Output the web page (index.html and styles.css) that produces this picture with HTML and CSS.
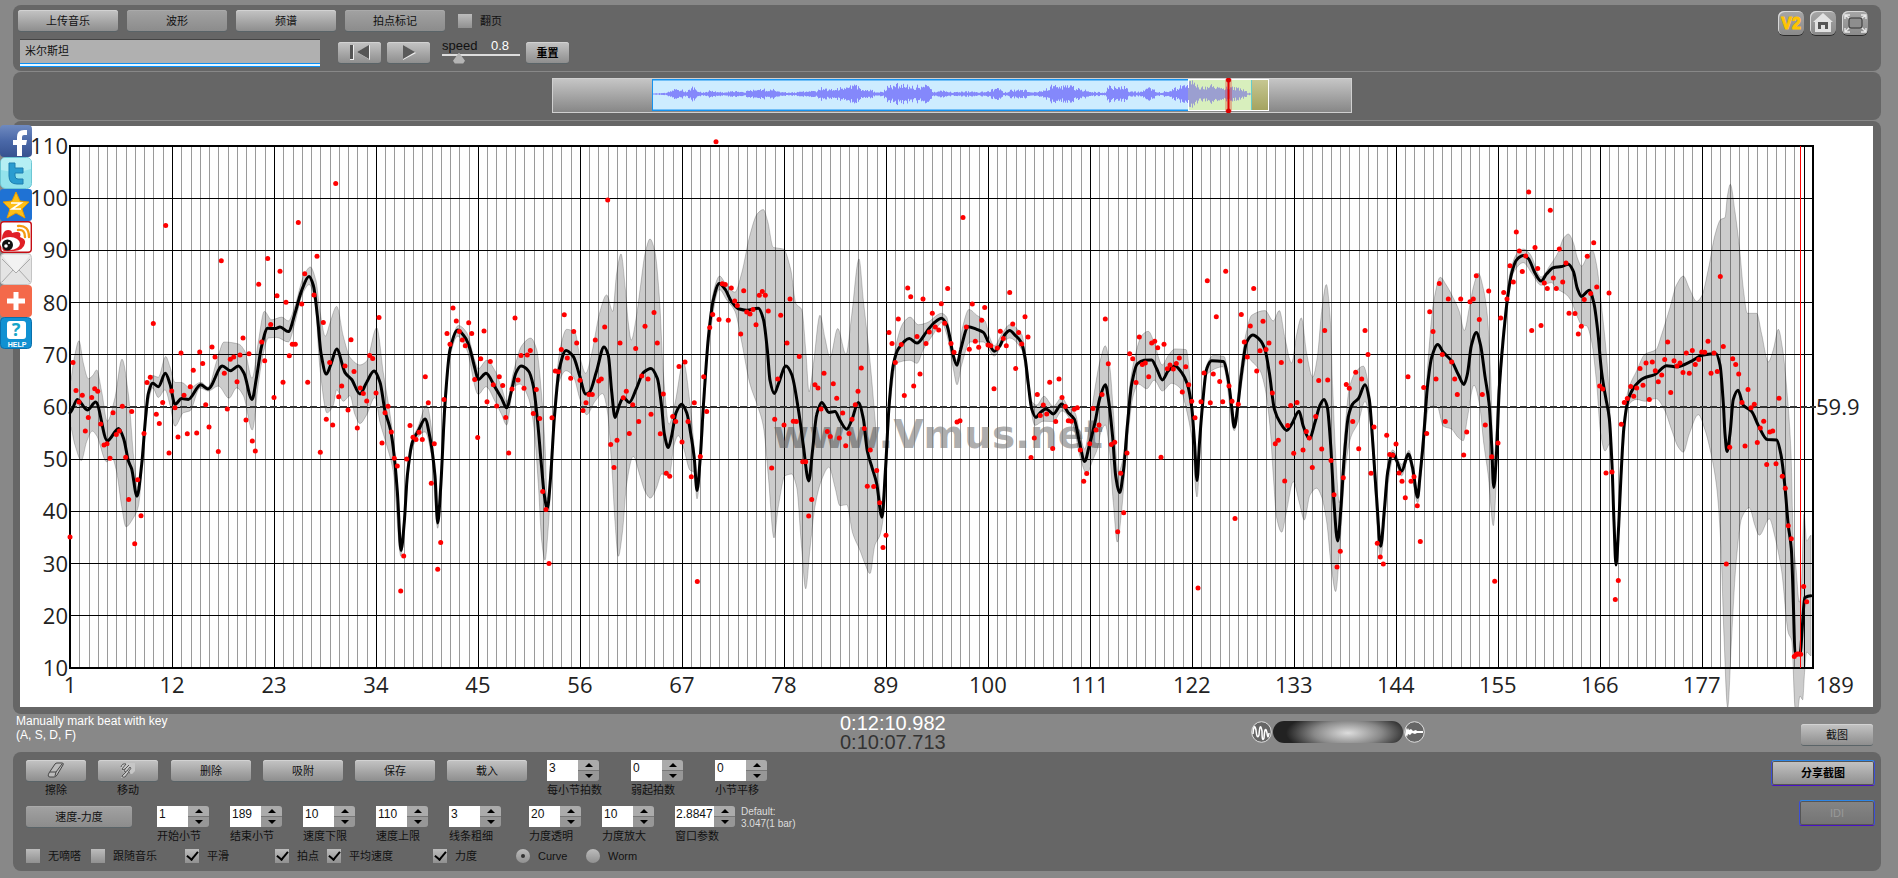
FILE: index.html
```html
<!DOCTYPE html>
<html lang="zh-CN">
<head>
<meta charset="utf-8">
<title>Vmus.net</title>
<link rel="stylesheet" href="styles.css">
</head>
<body>
<nav class="social" aria-label="分享">
  <a href="#" aria-label="Facebook"><svg viewBox="0 0 32 32"><defs><linearGradient id="fb" x2="0" y2="1"><stop stop-color="#6f8ac0"/><stop offset=".5" stop-color="#4a68a8"/><stop offset="1" stop-color="#36528f"/></linearGradient></defs><rect width="32" height="32" rx="4" fill="url(#fb)"/><path d="M17 31V20h-4v-5h4v-3q0-7 7-7h3v5h-3q-2 0-2 2v3h5l-1 5h-4v11z" fill="#fff"/></svg></a>
  <a href="#" aria-label="Twitter"><svg viewBox="0 0 32 32"><rect x=".5" y=".5" width="31" height="31" rx="5" fill="#93e3ec" stroke="#6cc7d4"/><path d="M1 5q0-4 4-4h22q4 0 4 4v7q-14 5-30 1z" fill="#b5eff4"/><path d="M9 6h6v5h8v5h-8v3q0 3 3 3h5v5h-6q-8 0-8-8z" fill="#2a9cd0" stroke="#1c7fb0" stroke-width="1"/></svg></a>
  <a href="#" aria-label="QQ空间"><svg viewBox="0 0 32 32"><rect width="32" height="32" rx="3" fill="#1f72d4"/><path d="M16 3l4 9 9 1-7 7 3 9-9-5-9 5 3-9-7-7 9-1z" fill="#fdbf17" stroke="#e89a00"/><path d="M11 14h10l-9 6h9" fill="none" stroke="#fff" stroke-width="1.600"/></svg></a>
  <a href="#" aria-label="微博"><svg viewBox="0 0 32 32"><rect x=".7" y=".7" width="30.6" height="30.6" rx="3" fill="#fff" stroke="#c40d14" stroke-width="1.4"/><path d="M2 17q1-8 6-8 4 0 4 3 6-2 8 0 1 2 0 4 6 2 5 6-1 7-11 8H4q-3-1-2-13z" fill="#e01f26"/><ellipse cx="10" cy="22.500" rx="10" ry="6.500" fill="#fff"/><circle cx="7.500" cy="24" r="5.500" fill="#111"/><circle cx="6" cy="25" r="1.800" fill="#fff"/><circle cx="9" cy="22" r="1" fill="#fff"/><path d="M18 9q7-1 7 7M18 5q11-1 11 11" fill="none" stroke="#f39a12" stroke-width="2.4" stroke-linecap="round"/></svg></a>
  <a href="#" aria-label="邮件"><svg viewBox="0 0 32 32"><rect x=".5" y=".5" width="31" height="31" rx="4" fill="#e4e4e4" stroke="#c4c4c4"/><path d="M2 2h28L16 20z" fill="#f2f2f2"/><path d="M2 6l14 14L30 6M2 29l11-12M30 29L19 17" fill="none" stroke="#aaa"/></svg></a>
  <a href="#" aria-label="更多"><svg viewBox="0 0 32 32"><rect width="32" height="32" rx="4" fill="#f4694a"/><path d="M13.500 7h5v6.500H25v5h-6.500V25h-5v-6.500H7v-5h6.500z" fill="#fff"/></svg></a>
  <a href="#" aria-label="帮助"><svg viewBox="0 0 32 32"><rect x=".5" y=".5" width="31" height="31" rx="4" fill="#1191d2" stroke="#0a6fab"/><rect x="7" y="4" width="19" height="18" rx="3" fill="#fff"/><text x="16" y="19" class="help-mark">?</text><text x="17" y="30" class="help-text">HELP</text></svg></a>
</nav>

<header class="panel toolbar">
  <div class="tools">
    <div class="tool-row">
      <button class="btn wide">上传音乐</button>
      <button class="btn wide flat">波形</button>
      <button class="btn wide">频谱</button>
      <button class="btn wide flat">拍点标记</button>
      <label class="check"><input type="checkbox">翻页</label>
    </div>
    <div class="tool-row lower">
      <input class="song" type="text" value="米尔斯坦" aria-label="曲名">
      <div class="transport">
        <button class="btn small" aria-label="回到开头"><svg width="22" height="17" viewBox="0 0 22 17"><path d="M1 1h4v15H1zM21 1v15L8 8z" fill="#eee"/><path d="M1 1h3v14H1zM20 1v14L8 8z" fill="#555"/></svg></button>
        <button class="btn small" aria-label="播放"><svg width="16" height="17" viewBox="0 0 16 17"><path d="M2 1v15l13-7z" fill="#eee"/><path d="M2 1v14l12-7z" fill="#5a5a5a"/></svg></button>
      </div>
      <div class="speed">
        <label for="speed">speed</label><output for="speed">0.8</output>
        <input id="speed" type="range" min="0.5" max="2.300" step="0.1" value="0.8">
      </div>
      <button class="btn small strong">重置</button>
    </div>
  </div>
  <div class="corner">
    <button class="chip" aria-label="V2"><svg viewBox="0 0 26 24"><text x="13" y="18" class="v2">V2</text></svg></button>
    <button class="chip" aria-label="主页"><svg viewBox="0 0 26 24"><path d="M13 2l10 9h-2v10H5V11H3z" fill="#e2e2e2"/><path d="M8 18v-7h10v7h-3v-4h-4v4z" fill="#555"/></svg></button>
    <button class="chip" aria-label="全屏"><svg viewBox="0 0 26 24"><rect x="7" y="7" width="13" height="10" rx="2" fill="#8e8e8e" stroke="#333"/><path d="M3 8V4h5M3 4l4 3M19 4h5v4M24 4l-4 3M3 17v4h5M3 21l4-4M24 17v4h-5M24 21l-4-4" fill="none" stroke="#e8e8e8" stroke-width="1.4"/></svg></button>
  </div>
</header>

<section class="panel overview">
  <svg id="wave" class="wave" viewBox="0 0 800 35" role="img" aria-label="波形总览">
    <defs><linearGradient id="strip" x2="0" y2="1"><stop stop-color="#c6c6c6"/><stop offset="1" stop-color="#868686"/></linearGradient>
    <linearGradient id="olive" x2="0" y2="1"><stop stop-color="#c6c792"/><stop offset="1" stop-color="#a3a25e"/></linearGradient></defs>
    <rect x=".5" y=".5" width="799" height="34" fill="url(#strip)" stroke="#d0d0d0"/>
    <rect x="100.5" y="2" width="537" height="30" fill="#cdecff" stroke="#1792ee" stroke-width="1"/>
    <path d="M100 1.5h536M100 32.5h536" stroke="#1792ee"/>
    <rect x="636" y="2" width="63" height="31" fill="#d8efbd"/>
    <rect x="699" y="2" width="18" height="31" fill="url(#olive)"/>
    <path d="M699.500 2v31" stroke="#6cc"/>
    <rect x="636.500" y="1.500" width="80" height="31" fill="none" stroke="#fff"/>
    <g id="wave-shape"></g>
    <rect x="673" y="1" width="7" height="33" fill="#e00" opacity=".25"/>
    <path d="M676.500 1v33" stroke="#e00000" stroke-width="2"/><circle cx="676.500" cy="2" r="2.500" fill="#d00"/><circle cx="676.500" cy="33" r="2.500" fill="#d00"/>
  </svg>
</section>

<main class="panel stage">
  <svg id="chart" class="chart" viewBox="20 126 1853 581" role="img" aria-label="速度-力度曲线">
    <g id="grid"></g>
    <text class="watermark" x="773" y="448">www.Vmus.net</text>
    <path id="band" class="band"/>
    <path class="mean" d="M70 407H1816"/>
    <path id="curve" class="curve"/>
    <g id="beats" class="beats"></g>
    <path class="cursor" d="M1800.500 146V668"/>
    <g id="labels" class="labels"></g>
  </svg>
</main>

<section class="status">
  <p class="hint">Manually mark beat with key<br>(A, S, D, F)</p>
  <p class="time"><span>0:12:10.982</span><span class="dark">0:10:07.713</span></p>
  <div class="blend">
    <svg width="21" height="22" viewBox="0 0 21 22"><ellipse cx="10.500" cy="11" rx="9.800" ry="10.300" fill="#666" stroke="#ddd"/><path d="M2 13q1-12 3-4 1 10 3 5 1-14 3-4 0 12 2 7 1-14 3-5 1 8 2 0" fill="none" stroke="#fff" stroke-width="1.500"/></svg>
    <div class="pill"></div>
    <svg width="21" height="22" viewBox="0 0 21 22"><ellipse cx="10.500" cy="11" rx="9.800" ry="10.300" fill="#666" stroke="#ddd"/><path d="M2 6l1 3 1-2 1 2 2-1 2 2 3-1 1 1h6v2h-6l-2 1-3-1-2 2-2-1-1 3-1-2-1 2z" fill="#fff"/></svg>
  </div>
  <button class="btn shot">截图</button>
</section>

<section class="panel controls">
  <div class="left">
    <div class="row first">
      <div class="actions">
        <div class="cell"><button class="btn icon" aria-labelledby="t1"><svg width="18" height="17" viewBox="0 0 18 17"><path d="M2 11L8 2q1-1 2-1h5q2 0 1 2l-6 10q-1 2-3 2H3q-3 0-1-4z" fill="#bbb" stroke="#444"/><path d="M3 10h6l6-8M9 10l-1 4" fill="none" stroke="#444"/></svg></button><span id="t1">擦除</span></div>
        <div class="cell"><button class="btn icon" aria-labelledby="t2"><svg width="18" height="17" viewBox="0 0 18 17"><path d="M2 5q1-4 5-4h9v8l-3 3-4-1-4 5H2l4-6-3-1z" fill="#c6c6c6"/><path d="M2 5q1-4 5-3L3 7q0 2 3 0l4-4M6 7q-2 4 2 2l3-4q2 1-1 4-2 2 1 2M7 10l-4 4q0 2 3 1l3-4" fill="none" stroke="#555"/></svg></button><span id="t2">移动</span></div>
      </div>
      <div class="actions text">
        <button class="btn mid">删除</button><button class="btn mid">吸附</button><button class="btn mid">保存</button><button class="btn mid">载入</button>
      </div>
      <div class="fields loose">
        <div class="field"><div class="spin"><input id="f1" type="text" value="3"><div class="arrows"><button aria-label="增加"></button><button aria-label="减少"></button></div></div><label for="f1">每小节拍数</label></div>
        <div class="field"><div class="spin"><input id="f2" type="text" value="0"><div class="arrows"><button aria-label="增加"></button><button aria-label="减少"></button></div></div><label for="f2">弱起拍数</label></div>
        <div class="field"><div class="spin"><input id="f3" type="text" value="0"><div class="arrows"><button aria-label="增加"></button><button aria-label="减少"></button></div></div><label for="f3">小节平移</label></div>
      </div>
    </div>
    <div class="row second">
      <button class="btn mode flat">速度-力度</button>
      <div class="fields">
        <div class="field"><div class="spin"><input id="g1" type="text" value="1"><div class="arrows"><button aria-label="增加"></button><button aria-label="减少"></button></div></div><label for="g1">开始小节</label></div>
        <div class="field"><div class="spin"><input id="g2" type="text" value="189"><div class="arrows"><button aria-label="增加"></button><button aria-label="减少"></button></div></div><label for="g2">结束小节</label></div>
        <div class="field"><div class="spin"><input id="g3" type="text" value="10"><div class="arrows"><button aria-label="增加"></button><button aria-label="减少"></button></div></div><label for="g3">速度下限</label></div>
        <div class="field"><div class="spin"><input id="g4" type="text" value="110"><div class="arrows"><button aria-label="增加"></button><button aria-label="减少"></button></div></div><label for="g4">速度上限</label></div>
        <div class="field"><div class="spin"><input id="g5" type="text" value="3"><div class="arrows"><button aria-label="增加"></button><button aria-label="减少"></button></div></div><label for="g5">线条粗细</label></div>
      </div>
      <div class="fields">
        <div class="field"><div class="spin"><input id="g6" type="text" value="20"><div class="arrows"><button aria-label="增加"></button><button aria-label="减少"></button></div></div><label for="g6">力度透明</label></div>
        <div class="field"><div class="spin"><input id="g7" type="text" value="10"><div class="arrows"><button aria-label="增加"></button><button aria-label="减少"></button></div></div><label for="g7">力度放大</label></div>
        <div class="field long"><div class="spin"><input id="g8" type="text" value="2.8847"><div class="arrows"><button aria-label="增加"></button><button aria-label="减少"></button></div></div><label for="g8">窗口参数</label></div>
      </div>
      <p class="default">Default:<br>3.047(1 bar)</p>
    </div>
    <div class="row options">
      <label class="check c1"><input type="checkbox">无嘀嗒</label>
      <label class="check c2"><input type="checkbox">跟随音乐</label>
      <label class="check c3"><input type="checkbox" checked>平滑</label>
      <label class="check c4"><input type="checkbox" checked>拍点</label>
      <label class="check c5"><input type="checkbox" checked>平均速度</label>
      <label class="check c6"><input type="checkbox" checked>力度</label>
      <label class="check c7"><input type="radio" name="view" checked>Curve</label>
      <label class="check c8"><input type="radio" name="view">Worm</label>
    </div>
  </div>
  <div class="right">
    <button class="btn share strong">分享截图</button>
    <button class="btn idi" disabled>IDI</button>
  </div>
</section>
<script src="chart.js"></script>
</body>
</html>
```

FILE: styles.css
```css
* { box-sizing: border-box; }
body {
  margin: 0;
  padding: 5px 17px 7px 13px;
  background: #888;
  color: #111;
  font: 11px/14px "Liberation Sans", "Noto Sans CJK SC", sans-serif;
}
p { margin: 0; }
button, input { font: inherit; color: inherit; }
svg { display: block; }
.panel { background: #666; border-radius: 8px; }

.social { position: absolute; left: 0; top: 125px; width: 32px; display: flex; flex-direction: column; }
.social a { display: block; height: 32px; }
.help-mark { font: bold 18px "Noto Sans", sans-serif; fill: #17a5c8; text-anchor: middle; }
.help-text { font: bold 7px "Liberation Sans", sans-serif; fill: #fff; text-anchor: middle; }

.btn {
  display: flex; align-items: center; justify-content: center;
  height: 21px; padding: 0; flex: none;
  border: 0; border-radius: 3px;
  background: linear-gradient(#c4c4c4, #8e8e8e);
  box-shadow: inset 0 1px #d2d2d2, 0 1px #5a6468;
}
.btn.flat { background: linear-gradient(#a2a2a2, #8c8c8c); box-shadow: inset 0 1px #aaa, 0 1px #5a6468; }
.btn.strong { font-weight: bold; color: #000; }
.wide { width: 100px; }
.small { width: 43px; }
.mid { width: 80px; }
.icon { width: 60px; }

.toolbar { display: flex; justify-content: space-between; height: 66px; padding: 5px 13px 0 5px; }
.tool-row { display: flex; gap: 9px; }
.tool-row.lower { gap: 0; padding: 8px 0 0 2px; align-items: flex-start; }
.check { display: flex; align-items: center; gap: 8px; }
.tool-row .check { margin-left: 4px; }
.check input {
  appearance: none; flex: none; width: 14px; height: 14px; margin: 0;
  background: linear-gradient(#bcbcbc, #909090);
  display: grid; place-items: center;
}
.check input[type="checkbox"]:checked::before {
  content: ""; width: 5px; height: 9px; margin-bottom: 3px;
  border: solid #000; border-width: 0 2px 2px 0; transform: rotate(40deg);
}
.check input[type="radio"] { border-radius: 50%; }
.check input[type="radio"]:checked::before { content: ""; width: 4px; height: 4px; border-radius: 50%; background: #333; }
.song {
  width: 300px; height: 28px; padding: 0 5px 8px;
  border: 0; border-top: 1px solid #444; background: #b0b0b0;
  box-shadow: inset 0 -1px #0a90f5, inset 0 -3px #e8f6ff, inset 0 -4px #0a90f5;
  outline: 0;
}
.transport { display: flex; gap: 6px; margin: 3px 12px 0 18px; }
.lower > .btn { margin: 3px 0 0 6px; }
.speed { width: 78px; display: grid; grid-template-columns: 49px 1fr; font-size: 13px; line-height: 13px; }
.speed output { color: #fff; }
.speed input {
  grid-column: 1 / 3; appearance: none; width: 78px; height: 12px; margin: 0;
  background: linear-gradient(#ddd, #ddd) 0 2px / 100% 2px no-repeat;
}
.speed input::-webkit-slider-thumb {
  appearance: none; width: 12px; height: 11px; background: #b4b4b4; clip-path: polygon(50% 0, 100% 75%, 85% 100%, 15% 100%, 0 75%);
}
.corner { display: flex; gap: 6px; padding-top: 1px; }
.chip {
  width: 26px; height: 24px; padding: 0; border: 0; border-radius: 6px;
  background: linear-gradient(#a6a6a6, #8a8a8a);
  box-shadow: inset 1px 1px #d8d8d8, 0 1px #2c2c2c;
}
.v2 { font: bold 16px "Liberation Sans", sans-serif; fill: #ffc400; stroke: #ffc400; text-anchor: middle; }

.overview { margin-top: 1px; padding: 6px 0 7px 9px; }
.wave { width: 800px; max-width: 100%; margin: 0 auto; }
.stage { margin-top: 1px; padding: 5px 8px 7px 7px; }
.chart { width: 100%; background: #fff; overflow: hidden; }
.minor { stroke: #9a9a9a; stroke-width: 1; shape-rendering: crispEdges; }
.major { stroke: #000; stroke-width: 1; shape-rendering: crispEdges; }
.frame { fill: none; stroke: #000; stroke-width: 2; }
.band { fill: #000; fill-opacity: .2; stroke: #000; stroke-opacity: .2; stroke-width: 1; }
.curve { fill: none; stroke: #000; stroke-width: 3; stroke-linejoin: round; stroke-linecap: round; }
.mean { fill: none; stroke: #333; stroke-width: 2; stroke-dasharray: 7 3; }
.beats { fill: #f00; }
.cursor { stroke: #f00; stroke-width: 1; shape-rendering: crispEdges; }
.labels { font: 22px "Open Sans", "Noto Sans", sans-serif; fill: #222; }
.watermark { font: bold 39px "DejaVu Sans", sans-serif; fill: #777; fill-opacity: .6; }

.status { display: flex; align-items: flex-start; height: 38px; padding-right: 8px; }
.hint { width: 827px; padding-left: 3px; color: #fff; font-size: 12px; line-height: 14px; }
.time { font-size: 20px; line-height: 19px; color: #fff; display: flex; flex-direction: column; }
.time .dark { color: #333; }
.blend { display: flex; align-items: center; gap: 1px; margin: 7px auto 0 305px; }
.pill { width: 130px; height: 22px; border-radius: 11px; background: radial-gradient(ellipse 62px 22px at 75px 12px, #ddd, #888 55%, #222); }
.shot { width: 72px; margin-top: 10px; }

.controls { display: flex; justify-content: space-between; height: 119px; padding: 8px 6px 0 13px; }
.row { display: flex; align-items: flex-start; }
.first { height: 46px; }
.second { height: 42px; }
.actions { display: flex; gap: 12px; }
.actions.text { margin: 0 20px 0 13px; }
.cell { display: flex; flex-direction: column; align-items: center; }
.cell span, .field label { margin-top: 2px; white-space: nowrap; }
.fields { display: flex; gap: 21px; margin-left: 25px; }
.fields + .fields { margin-left: 28px; }
.fields.loose { gap: 32px; margin-left: 0; }
.field { width: 52px; display: flex; flex-direction: column; align-items: flex-start; }
.field.long { width: 60px; }
.field.long input { padding: 0 0 5px 1px; }
.spin { display: flex; width: 100%; height: 21px; }
.spin input { flex: 1; min-width: 0; height: 21px; padding: 0 2px 5px; border: 0; background: #fff; font-size: 12px; outline: 0; }
.arrows { flex: none; width: 21px; display: flex; flex-direction: column; gap: 1px; background: #777; border-radius: 0 3px 3px 0; overflow: hidden; }
.arrows button { flex: 1; padding: 0; border: 0; background: #ababab; display: grid; place-items: center; }
.arrows button::before { content: ""; border: 4px solid transparent; border-top: 0; border-bottom: 4px solid #000; }
.arrows button + button { background: #979797; }
.arrows button + button::before { border-top: 4px solid #000; border-bottom: 0; }
.mode { width: 106px; }
.default { margin-left: 6px; color: #ddd; font-size: 10px; line-height: 12px; }
.options { height: 16px; align-items: center; }
.options .check { height: 14px; white-space: nowrap; }
.c1 { width: 65px; }
.c2 { width: 94px; }
.c3 { width: 90px; }
.c4 { width: 52px; }
.c5 { width: 106px; }
.c6 { width: 83px; }
.c7 { width: 70px; }
.right { display: flex; flex-direction: column; align-items: flex-end; gap: 14px; }
.right .btn {
  height: 26px; border: 1px solid; border-color: #2d86e8 #3c4fd8 #4a12c8;
  background: linear-gradient(#c4c4c4, #8e8e8e);
  box-shadow: inset 0 0 0 1px #555;
}
.right .share { width: 104px; }
.right .idi { width: 76px; color: #999; background: linear-gradient(#858585, #747474); }
```

FILE: chart.js
```js
const NS = 'http://www.w3.org/2000/svg';
function add(parent, tag, attrs, text) {
  const el = document.createElementNS(NS, tag);
  for (const k in attrs) el.setAttribute(k, attrs[k]);
  if (text !== undefined) el.textContent = text;
  document.getElementById(parent).appendChild(el);
}

// Each series is stored in four pages of 1410 horizontal units, three units to a pixel.
const series = pages => pages.flatMap((page, i) =>
  page.trim().split(/\s+/).map(p => {
    const [x, y] = p.split(',').map(Number);
    return [i * 470 + x / 3, 120 + y / 2.613];
  }));

const beats = series([
`210,1090 219,634 228,707 237,737 247,719 256,813 265,777 275,725 284,702 293,709 302,794 312,849 321,846 330,884 339,765 349,822 358,813 367,748 377,881 386,992 395,762 404,1107 413,940 423,1034 432,819 441,686 451,672 460,532 469,769 478,793 488,738 497,276 507,870 515,708 525,752 534,828 543,609 552,719 562,820 571,697 580,654 590,818 599,606 608,636 617,744 627,802 636,593 645,619 655,866 664,368 673,662 682,755 691,625 701,619 711,684 720,614 729,570 738,784 747,611 757,839 766,865 776,429 785,580 794,629 803,362 812,534 822,725 831,459 840,395 849,685 858,476 868,616 877,586 886,586 895,268 905,481 914,402 923,685 942,457 951,356 961,868 970,529 979,782 989,634 998,797 1007,166 1016,723 1025,695 1035,643 1044,758 1053,574 1062,657 1072,805 1081,700 1090,715 1100,734 1109,615 1118,623 1128,713 1137,516 1146,844 1155,765 1164,748 1174,815 1183,884 1192,904 1202,1231 1211,1139 1220,886 1230,798 1239,829 1248,835 1257,816 1267,835 1276,671 1285,739 1294,949 1303,846 1313,1174 1322,1104 1332,730 1341,558 1350,586 1359,491 1369,525 1378,553 1387,575 1396,590 1406,530 1415,558 1424,678 1433,830`,
`32,624 42,551 51,736 61,631 70,692 80,747 88,671 98,694 107,777 116,870 126,703 135,517 144,679 153,615 162,701 172,614 181,602 190,767 199,704 209,780 218,971 228,1018 237,1159 246,778 256,656 265,658 274,600 283,509 292,622 302,675 311,553 320,583 330,680 339,759 348,739 357,717 367,717 376,575 386,682 394,677 404,541 413,209 422,848 432,908 441,837 450,583 460,726 469,709 478,819 488,744 497,597 506,788 515,669 525,539 534,677 543,769 552,503 562,583 571,820 580,716 589,923 599,931 608,775 617,788 627,644 636,841 645,632 654,788 664,932 673,739 682,1206 691,879 701,671 710,762 719,542 728,508 738,57 747,521 757,428 766,430 775,523 784,439 794,473 802,485 812,559 821,446 830,502 840,507 849,495 858,535 868,458 877,448 886,458 895,499 905,909 914,782 923,677 932,510 942,797 951,583 960,468 970,787 979,788 988,618 998,893 1007,893 1016,1035 1025,992 1035,692 1044,700 1053,755 1062,662 1072,814 1081,827 1090,689 1100,727 1108,831 1118,766 1127,851 1137,819 1146,782 1156,744 1164,709 1174,648 1183,806 1192,957 1201,862 1211,958 1220,916 1229,1000 1239,1117 1248,1085 1257,555 1266,584 1276,634 1285,520 1294,587 1303,720 1313,439 1322,462 1331,695 1341,566 1350,664 1359,468 1368,584 1378,554 1387,505 1396,541 1406,549 1414,480 1424,531 1433,440`,
`33,584 42,607 51,789 60,786 69,255 79,541 88,599 97,481 106,578 116,594 125,523 134,490 144,588 152,590 162,702 172,596 181,552 190,571 199,590 209,451 218,533 227,649 236,555 245,585 255,514 264,567 273,882 283,831 292,717 301,772 310,745 320,768 329,685 338,858 347,788 357,677 366,725 376,749 385,786 394,787 403,756 412,752 421,862 431,944 440,924 449,846 459,754 468,810 477,797 486,717 496,520 505,637 514,848 524,842 533,1076 542,923 551,1026 561,870 569,611 578,624 588,686 598,567 607,639 616,635 626,671 635,583 644,578 653,595 663,881 672,586 682,650 690,640 700,651 709,636 718,622 727,711 737,645 746,692 755,735 765,778 774,1223 783,736 792,661 802,420 811,739 820,664 829,514 839,683 848,736 857,395 867,695 876,735 885,1041 895,743 904,508 913,580 922,619 931,538 941,440 950,656 960,603 969,526 978,600 987,583 997,713 1006,846 1015,837 1024,634 1034,943 1043,798 1052,746 1061,871 1071,738 1080,630 1089,862 1099,814 1108,831 1117,908 1127,775 1136,681 1145,860 1154,550 1163,679 1173,890 1182,979 1191,1168 1201,1127 1210,935 1219,691 1228,701 1238,788 1247,659 1256,859 1265,677 1275,550 1284,613 1293,923 1302,802 1312,1106 1321,1142 1330,1160 1340,824 1349,874 1358,876 1368,847 1377,922 1386,944 1396,987 1404,671 1413,944 1422,932 1432,1008`,
`31,1101 41,699 50,819 59,501 69,553 78,677 88,427 97,613 106,788 115,468 125,632 134,677 142,717 152,468 161,875 170,815 180,475 190,468 199,407 208,521 217,717 226,797 236,447 245,880 254,1205 264,844 272,517 281,451 291,468 300,381 310,423 319,293 328,342 337,396 347,355 356,188 365,550 375,333 383,388 393,537 403,426 412,440 421,236 430,413 439,440 448,337 458,423 468,374 477,505 495,506 505,559 514,539 523,469 532,356 542,453 551,321 560,436 569,695 578,703 588,922 597,452 606,920 616,1253 625,1203 634,795 643,738 652,728 662,696 671,722 680,700 690,649 699,693 708,635 718,730 727,632 736,655 745,684 755,666 764,626 773,580 782,712 792,629 801,643 810,635 819,660 829,609 838,662 847,602 856,639 866,626 875,606 884,607 894,578 903,662 912,609 922,657 931,409 940,592 949,1160 959,855 968,624 977,639 986,664 996,738 1005,852 1014,704 1023,752 1033,743 1042,843 1051,805 1061,787 1070,900 1079,815 1088,813 1098,898 1107,727 1117,931 1126,962 1135,1060 1144,1094 1153,1402 1158,1397 1162,1395 1167,1395 1172,1396 1181,1219 1190,1259`]);

const tempo = series([
`210,765 232,730 262,758 287,737 322,838 356,806 372,836 385,890 395,912 411,983 425,900 437,775 445,715 458,688 475,697 496,662 510,690 525,743 545,728 565,730 602,692 624,703 667,643 691,655 715,643 732,662 756,730 770,670 785,590 803,544 825,545 840,541 865,553 885,505 905,445 927,409 940,432 952,510 963,610 979,664 992,640 1010,598 1035,660 1055,678 1080,716 1100,685 1122,656 1140,685 1155,760 1172,812 1183,880 1192,970 1203,1125 1213,1050 1222,930 1237,842 1255,812 1275,781 1290,830 1305,930 1313,1053 1322,960 1335,740 1350,600 1373,549 1390,562 1405,585 1425,650`,
`25,678 48,662 75,698 95,728 110,752 125,705 138,660 153,643 175,655 190,695 203,790 215,910 223,980 232,1015 242,930 253,780 268,650 288,602 310,618 328,665 347,716 358,712 380,655 402,593 415,615 425,710 435,777 448,745 460,725 478,738 500,700 520,660 543,649 562,675 575,750 583,820 595,856 605,825 618,765 635,743 650,765 665,835 673,885 681,968 691,880 700,750 715,570 730,470 748,427 765,442 785,475 805,493 830,497 865,492 880,520 892,600 900,680 913,715 925,690 948,643 965,665 985,755 1000,850 1016,943 1028,860 1040,770 1055,738 1077,764 1095,762 1110,785 1130,808 1145,785 1165,738 1180,780 1192,865 1205,905 1220,950 1236,1038 1246,920 1257,750 1270,640 1285,598 1318,571 1341,583 1370,553 1392,530 1415,518 1430,535`,
`30,570 38,610 51,641 62,600 85,540 110,547 130,555 145,580 163,604 180,590 195,560 209,550 225,562 243,580 255,620 265,690 275,755 288,777 300,765 318,755 340,768 365,742 385,765 403,782 418,840 434,892 448,850 465,790 480,725 496,692 507,740 518,830 527,930 539,973 550,920 562,800 575,690 592,637 612,628 635,627 650,650 667,679 685,655 705,643 725,660 742,690 755,750 764,850 771,942 778,850 788,740 800,650 815,629 850,631 865,680 875,750 883,803 893,750 905,660 920,580 938,562 960,575 975,600 988,660 1003,755 1020,790 1040,811 1055,795 1077,761 1090,800 1108,833 1125,790 1140,745 1152,730 1162,750 1172,850 1182,1000 1193,1100 1203,1010 1212,890 1225,775 1238,742 1255,728 1275,692 1288,730 1298,840 1310,990 1322,1114 1333,1020 1343,920 1358,872 1370,890 1385,918 1405,873 1418,910`,
`23,986 30,930 40,840 52,700 65,620 83,587 100,607 125,630 145,665 162,691 172,665 184,590 199,555 212,590 225,670 237,740 245,850 251,960 259,880 268,700 280,570 292,470 305,400 320,365 340,354 355,362 375,400 393,421 410,402 430,386 455,383 475,377 490,395 502,440 514,461 538,445 552,480 563,550 575,660 587,725 598,780 606,900 612,1050 618,1163 626,1060 633,930 642,800 655,730 675,695 700,675 735,665 770,642 800,645 840,632 880,614 918,611 930,640 940,740 945,820 951,866 960,820 970,730 984,706 1000,745 1025,762 1045,798 1072,835 1100,836 1113,875 1125,960 1135,1060 1144,1120 1150,1260 1155,1392 1170,1396 1178,1310 1184,1248 1203,1243`]);

const upper = series([
`210,685 222,625 237,577 250,635 265,676 278,668 290,653 305,710 322,787 345,725 366,625 385,715 402,890 413,960 430,840 445,700 458,668 475,672 497,618 510,645 525,686 545,686 570,700 602,685 624,698 650,630 672,580 715,585 735,605 756,675 775,580 793,500 815,522 845,515 865,525 885,485 910,410 931,384 948,420 960,500 976,565 990,530 1010,487 1030,565 1050,620 1080,640 1100,630 1130,543 1150,660 1175,800 1190,930 1203,1110 1215,1030 1235,840 1255,800 1280,745 1295,810 1313,1030 1335,720 1355,580 1375,537 1400,555 1425,630`,
`25,650 50,628 75,655 95,700 110,735 130,660 155,590 182,570 200,600 213,700 225,850 232,990 245,850 258,690 270,600 290,547 315,555 330,620 347,662 365,610 390,500 410,457 428,500 440,400 453,350 466,440 475,530 484,575 498,520 512,430 525,350 540,311 555,345 568,460 580,660 597,795 615,740 640,632 660,740 675,880 683,960 695,820 712,590 730,450 749,408 765,425 795,450 815,400 840,300 862,245 880,234 893,265 910,333 940,337 962,390 978,480 995,495 1008,610 1017,710 1030,640 1050,510 1065,570 1080,620 1103,545 1128,612 1145,510 1167,363 1180,470 1200,630 1215,780 1235,1000 1248,880 1262,690 1280,580 1300,530 1320,515 1345,535 1370,530 1415,505 1430,515`,
`30,560 51,628 68,540 87,495 110,510 135,525 150,570 163,590 185,560 209,535 245,560 262,650 275,735 290,745 312,722 340,748 365,725 385,750 405,765 420,820 434,860 448,800 465,700 480,630 496,590 510,650 520,760 535,920 550,880 570,690 590,600 605,563 625,552 640,575 667,640 685,615 705,598 738,600 752,690 771,900 785,740 800,640 820,615 852,618 870,700 883,780 900,660 920,550 935,510 975,498 1000,525 1018,498 1035,570 1055,635 1070,560 1084,517 1100,610 1118,672 1132,620 1145,500 1159,430 1170,510 1178,700 1188,890 1198,1000 1212,840 1228,700 1250,655 1270,643 1285,690 1300,830 1322,1090 1343,900 1358,862 1385,900 1407,863`,
`23,965 40,800 55,620 70,480 91,411 108,430 130,465 148,500 163,550 178,490 192,430 205,400 220,440 232,510 242,670 251,900 265,690 280,540 300,400 320,350 340,337 360,350 393,410 420,380 445,345 460,310 475,298 490,320 502,360 515,382 530,360 548,342 560,380 575,490 590,620 600,760 618,1150 635,880 652,715 680,655 705,612 738,600 755,560 780,490 800,430 820,408 838,440 860,474 875,460 895,390 915,300 932,260 945,255 952,200 961,168 975,240 988,330 1000,440 1012,505 1040,505 1055,560 1075,632 1090,600 1105,547 1118,600 1132,720 1143,870 1150,1100 1158,1170 1168,1260 1174,1230 1182,1030 1190,1100 1203,1085`]);

const lower = series([
`210,800 225,850 244,890 260,840 277,813 290,825 320,893 335,880 350,920 365,1010 378,1063 400,1040 415,1010 430,870 445,740 458,700 475,725 495,705 510,745 525,800 550,765 570,760 600,700 625,708 655,695 687,727 710,700 730,720 757,810 775,690 790,610 805,570 830,568 865,580 885,530 905,460 928,430 945,480 960,650 981,765 1000,745 1010,705 1030,735 1050,720 1065,770 1080,793 1100,770 1125,725 1140,790 1160,850 1180,920 1203,1140 1220,960 1240,850 1275,815 1295,880 1313,1067 1330,850 1350,620 1373,565 1400,600`,
`25,717 48,697 75,735 95,770 110,797 130,700 150,690 175,725 190,790 205,950 215,1100 225,1150 236,1050 250,800 265,690 288,655 310,670 330,730 350,770 375,735 398,715 412,760 425,900 435,1050 445,1140 457,1080 470,950 490,879 510,930 525,970 541,988 560,960 575,925 598,930 612,850 625,825 640,855 660,915 672,920 681,990 692,900 715,600 748,443 770,470 795,500 815,580 840,690 862,745 880,800 895,930 912,1092 925,1010 945,930 965,925 980,960 995,1120 1007,1225 1020,1120 1035,1010 1055,940 1077,907 1095,960 1110,1008 1130,1005 1148,1080 1170,1125 1185,1160 1200,1185 1215,1110 1230,1085 1245,1000 1260,750 1280,635 1320,628 1341,636 1360,600 1390,560 1415,530 1430,560`,
`30,600 40,650 51,692 65,640 90,580 130,580 163,617 190,580 209,570 245,600 262,690 285,798 310,787 340,788 366,760 400,800 420,880 440,924 460,885 472,860 483,815 496,797 508,860 520,1000 532,1103 545,1020 560,860 580,720 595,690 620,702 643,680 667,708 695,688 720,700 740,760 755,830 771,985 785,780 800,665 850,645 883,812 905,690 920,620 940,635 960,655 975,700 990,800 1000,930 1010,1040 1025,1077 1040,1020 1060,945 1078,1000 1093,1045 1110,980 1130,962 1145,985 1160,1050 1173,1160 1187,1232 1200,1110 1215,920 1232,830 1255,790 1275,735 1290,790 1322,1142 1343,960 1360,885 1385,930 1405,885`,
`23,1000 40,870 55,755 80,745 100,800 125,808 145,830 160,838 172,780 192,693 208,740 222,850 235,930 250,1060 262,880 275,640 290,500 310,400 340,373 365,400 393,432 425,425 440,440 470,457 485,475 500,510 515,535 530,538 545,580 560,690 572,820 585,865 600,845 618,1165 640,860 655,745 680,730 705,735 738,728 765,760 785,810 805,855 820,868 838,820 865,770 885,810 905,880 920,960 932,1100 942,1350 953,1535 965,1350 978,1160 995,1040 1018,1013 1035,1060 1048,1085 1078,1042 1095,1090 1115,1180 1135,1340 1145,1360 1156,1540 1163,1540 1170,1505 1178,1515 1184,1440 1190,1390 1203,1400`]);

// Monotone cubic interpolation: flat tangents at every local extreme.
function smooth(p) {
  const slope = i => (p[i + 1][1] - p[i][1]) / (p[i + 1][0] - p[i][0]);
  const m = p.map((_, i) => {
    if (i === 0 || i === p.length - 1) return 0;
    const a = slope(i - 1), b = slope(i);
    return a * b <= 0 ? 0 : 2 * a * b / (a + b);
  });
  let d = '';
  for (let i = 0; i < p.length - 1; i++) {
    const [x0, y0] = p[i], [x1, y1] = p[i + 1], h = (x1 - x0) / 3;
    d += `C${[x0 + h, y0 + m[i] * h, x1 - h, y1 - m[i + 1] * h, x1, y1].map(v => v.toFixed(1)).join(' ')}`;
  }
  return d;
}
const start = p => p[0].map(v => v.toFixed(1)).join(' ');

// Lower edge is traced backwards to close the band.
function reversed(p) {
  const nums = smooth(p).slice(1).split('C').map(s => s.split(' ').map(Number));
  let d = '';
  for (let i = nums.length - 1; i >= 0; i--) {
    const n = nums[i], to = i ? nums[i - 1].slice(4) : p[0];
    d += `C${n[2]} ${n[3]} ${n[0]} ${n[1]} ${to[0]} ${to[1]}`;
  }
  return d;
}
const end = lower[lower.length - 1];
document.getElementById('band').setAttribute('d',
  `M${start(upper)}${smooth(upper)}L${end[0]} ${end[1]}${reversed(lower)}Z`);
document.getElementById('curve').setAttribute('d', `M${start(tempo)}${smooth(tempo)}`);
for (const [x, y] of beats) add('beats', 'circle', { cx: x.toFixed(1), cy: y.toFixed(1), r: 2.5 });

const left = 70, right = 1813, top_ = 146, bottom = 668;
const xOf = measure => left + (measure - 1) * (right - left) / 188;
const yOf = value => bottom - (value - 10) * (bottom - top_) / 100;
for (let n = 2; n < 189; n++) {
  const major = (n - 1) % 11 === 0 || n === 188;
  const x = Math.round(xOf(n)) + 0.5;
  add('grid', 'line', { x1: x, x2: x, y1: top_, y2: bottom, class: major ? 'major' : 'minor' });
}
for (let v = 10; v <= 110; v += 10) {
  add('grid', 'line', { x1: left, x2: right, y1: yOf(v), y2: yOf(v), class: 'major' });
  add('labels', 'text', { x: 68, y: yOf(v) + 8, 'text-anchor': 'end' }, v);
}
add('grid', 'rect', { x: left, y: top_, width: right - left, height: bottom - top_, class: 'frame' });
for (let n = 1; n <= 177; n += 11) add('labels', 'text', { x: xOf(n), y: 693, 'text-anchor': 'middle' }, n);
add('labels', 'text', { x: 1816, y: 693 }, 189);
add('labels', 'text', { x: 1816, y: 415 }, '59.9');

// Loudness outline of the recording.
const env = '212:2 238:3 250:14 265:15 275:8 288:22 295:10 305:5 320:10 345:6 365:10 380:5 400:12 415:14 440:13 455:6 470:4 500:8 520:8 530:20 545:12 570:22 580:28 600:26 612:10 620:15 635:5 648:8 655:25 680:32 705:20 720:28 735:22 742:5 760:10 780:5 800:7 840:7 865:18 875:5 890:12 915:12 935:5 948:10 965:25 1000:22 1015:18 1035:8 1068:4 1072:28 1085:20 1105:22 1112:7 1130:7 1150:17 1170:5 1190:12 1205:20 1225:32 1235:38 1245:22 1270:25 1290:18 1310:20 1330:14 1335:4 1343:2'
  .split(' ').map(s => s.split(':').map(Number)).map(([x, a]) => [(x - 22) / 1.889, a / 3]);
let k = 0;
for (let x = 101; x < 699; x++) {
  while (k < env.length - 2 && env[k + 1][0] < x) k++;
  const [x0, a0] = env[k], [x1, a1] = env[k + 1];
  const noise = 0.5 + 0.7 * (Math.abs(Math.sin(x * 12.9898) * 4375.85) % 1);
  const a = Math.max(0.5, (a0 + (a1 - a0) * Math.min(1, (x - x0) / (x1 - x0))) * noise);
  add('wave-shape', 'rect', { x, y: 16 - a, width: 1, height: 2 * a, fill: x < 636 ? '#8488fb' : '#9b9fd0' });
}
```
